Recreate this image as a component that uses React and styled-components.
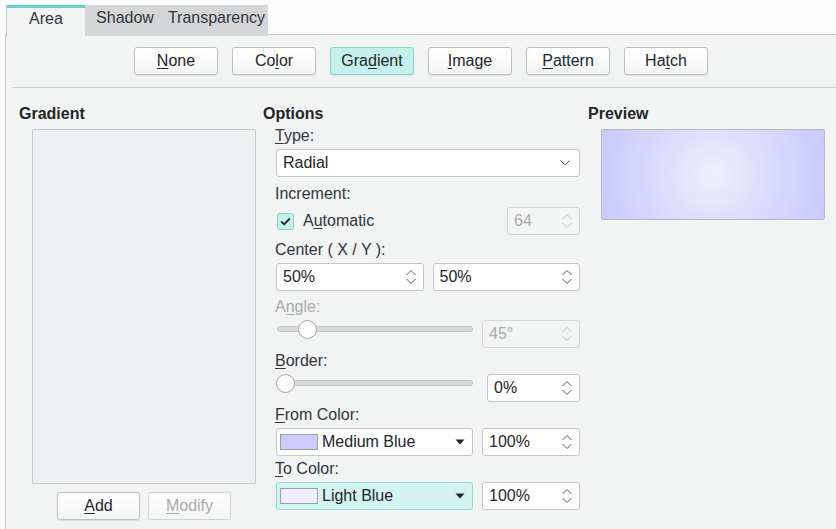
import React from "react";
import styled, { createGlobalStyle, css } from "styled-components";

const GlobalStyle = createGlobalStyle`
  html, body {
    margin: 0;
    padding: 0;
    background: #fbfbfb;
    font-family: "Liberation Sans", Arial, sans-serif;
    font-size: 16px;
    color: #232627;
    overflow: hidden;
  }
  * { box-sizing: border-box; }
`;

const Page = styled.div`
  width: 836px;
  height: 529px;
  display: flex;
  flex-direction: column;
`;

const TabBar = styled.div`
  display: flex;
  padding: 5px 0 0 6px;
  height: 35px;
  position: relative;
  z-index: 1;
  margin-bottom: -1px;
`;

const Tab = styled.div`
  height: 31px;
  display: flex;
  align-items: center;
  justify-content: center;
  padding: 0 0 5px 0;
  width: ${({ w }) => w}px;
  background: #d5d6d7;
  color: #31363b;
  ${({ active }) =>
    active &&
    css`
      background: #f2f3f3;
      border-top: 3px solid #66d3c6;
      border-left: 1px solid #c5c7c9;
      padding-bottom: 7px;
    `}
`;

const Frame = styled.div`
  flex: 1;
  margin-left: 5px;
  background: #f2f3f3;
  border-top: 1px solid #c5c7c9;
  border-left: 1px solid #c5c7c9;
  display: flex;
  flex-direction: column;
`;

const TypeRow = styled.div`
  display: flex;
  justify-content: center;
  gap: 14px;
  padding: 12px 0 12px 0;
`;

const Button = styled.button`
  width: ${({ w }) => w || 84}px;
  height: 28px;
  font-family: inherit;
  font-size: 16px;
  color: ${({ disabled }) => (disabled ? "#a8aaac" : "#232627")};
  background: ${({ active }) =>
    active ? "#c4efea" : "linear-gradient(#ffffff, #f4f5f5)"};
  border: 1px solid ${({ active, disabled }) =>
    active ? "#7fd6cc" : disabled ? "#d0d2d3" : "#bcbec0"};
  border-radius: 3px;
  box-shadow: ${({ disabled }) => (disabled ? "none" : "0 1px 1px rgba(0,0,0,0.08)")};
  padding: 0;
  cursor: default;
`;

const U = styled.span`
  text-decoration: underline;
  text-underline-offset: 2px;
`;

const Separator = styled.div`
  margin-left: 6px;
  border-top: 1px solid #d0d2d3;
`;

const Columns = styled.div`
  display: grid;
  grid-template-columns: 244px 325px 1fr;
  padding: 16px 0 0 13px;
`;

const Column = styled.div`
  display: flex;
  flex-direction: column;
`;

const Heading = styled.div`
  font-weight: bold;
  line-height: 20px;
  color: #232627;
`;

const ListBox = styled.div`
  margin: 5px 0 0 13px;
  width: 224px;
  height: 355px;
  background: #eff0f1;
  border: 1px solid #c5c7c9;
  border-radius: 2px;
`;

const ListButtons = styled.div`
  margin: 8px 0 0 13px;
  width: 224px;
  display: flex;
  justify-content: center;
  gap: 8px;
`;

const Label = styled.div`
  line-height: 19px;
  margin: ${({ mt }) => mt}px 0 4px 12px;
  color: ${({ disabled }) => (disabled ? "#a8aaac" : "#31363b")};
`;

const Row = styled.div`
  display: flex;
  align-items: ${({ top }) => (top ? "flex-start" : "center")};
  gap: 9px;
  margin-left: 13px;
  width: 304px;
`;

const Field = styled.div`
  height: 28px;
  display: flex;
  align-items: center;
  padding: 0 6px 0 6px;
  background: ${({ disabled, hl }) =>
    disabled ? "#f4f5f5" : hl ? "#d4f3ef" : "#ffffff"};
  border: 1px solid ${({ disabled, hl }) =>
    disabled ? "#d3d5d6" : hl ? "#8fdad1" : "#c3c5c7"};
  border-radius: 3px;
  color: ${({ disabled }) => (disabled ? "#a8aaac" : "#232627")};
  ${({ w }) => (w ? `width: ${w}px; flex: none;` : "flex: 1;")}
  ${({ ml }) => ml && `margin-left: ${ml}px;`}
`;

const FieldText = styled.span`
  flex: 1;
  white-space: nowrap;
`;

const Swatch = styled.span`
  width: 38px;
  height: 16px;
  margin: 0 4px 0 -3px;
  background: ${({ color }) => color};
  border: 1px solid #9c9ea2;
`;

const CheckRow = styled.div`
  display: flex;
  align-items: center;
  margin-left: 13px;
  width: 304px;
`;

const CheckBox = styled.span`
  width: 17px;
  height: 17px;
  margin-left: 1px;
  display: flex;
  align-items: center;
  justify-content: center;
  background: #c6f0eb;
  border: 1px solid #80d2c8;
  border-radius: 3px;
`;

const CheckLabel = styled.span`
  margin-left: 9px;
  flex: 1;
  color: #31363b;
`;

const Slider = styled.div`
  position: relative;
  flex: 1;
  height: 18px;
  margin-left: 1px;
  display: flex;
  align-items: center;
`;

const Groove = styled.div`
  width: 100%;
  height: 6px;
  border-radius: 3px;
  background: #d8d9da;
  border: 1px solid #c8cacb;
`;

const Thumb = styled.div`
  position: absolute;
  top: 0;
  left: ${({ at }) => at}px;
  width: 19px;
  height: 19px;
  border-radius: 50%;
  background: #fdfdfd;
  border: 1px solid #a3a5a8;
`;

const Preview = styled.div`
  margin: 5px 0 0 13px;
  width: 224px;
  height: 91px;
  border: 1px solid #b8bac0;
  border-radius: 2px;
  background: radial-gradient(circle farthest-corner at 50% 50%, #efeffb 0%, #dcdcfd 45%, #c9c9fd 100%);
`;

const SpinArrows = ({ disabled }) => (
  <svg width="12" height="20" viewBox="0 0 12 20" style={{ flex: "none" }}>
    <path
      d="M1.5 8 L6 3.5 L10.5 8 M1.5 12 L6 16.5 L10.5 12"
      fill="none"
      stroke={disabled ? "#b6b8ba" : "#55585c"}
      strokeWidth="1"
    />
  </svg>
);

const Chevron = () => (
  <svg width="12" height="8" viewBox="0 0 12 8" style={{ flex: "none", marginRight: 2 }}>
    <path d="M1.5 1.5 L6 6 L10.5 1.5" fill="none" stroke="#55585c" strokeWidth="1" />
  </svg>
);

const Caret = () => (
  <svg width="12" height="6" viewBox="0 0 12 6" style={{ flex: "none", marginRight: 0 }}>
    <path d="M1.5 0.5 L10.5 0.5 L6 5.5 Z" fill="#232627" />
  </svg>
);

const Check = () => (
  <svg width="11" height="9" viewBox="0 0 11 9">
    <path d="M1.2 4.5 L4.2 7.3 L9.8 1.5" fill="none" stroke="#232627" strokeWidth="1.8" />
  </svg>
);

const Spin = ({ value, disabled, w, ml }) => (
  <Field disabled={disabled} w={w} ml={ml}>
    <FieldText>{value}</FieldText>
    <SpinArrows disabled={disabled} />
  </Field>
);

const ColorDrop = ({ swatch, name, hl }) => (
  <Field w={197} hl={hl}>
    <Swatch color={swatch} />
    <FieldText>{name}</FieldText>
    <Caret />
  </Field>
);

const fillTypes = [
  ["", "N", "one"],
  ["Co", "l", "or"],
  ["Gra", "d", "ient"],
  ["", "I", "mage"],
  ["", "P", "attern"],
  ["Ha", "t", "ch"],
];

export default function App() {
  return (
    <Page>
      <GlobalStyle />
      <TabBar>
        <Tab active w={79}>Area</Tab>
        <Tab w={80}>Shadow</Tab>
        <Tab w={103}>Transparency</Tab>
      </TabBar>
      <Frame>
        <TypeRow>
          {fillTypes.map(([a, u, b], i) => (
            <Button key={i} active={i === 2}>
              {a}
              <U>{u}</U>
              {b}
            </Button>
          ))}
        </TypeRow>
        <Separator />
        <Columns>
          <Column>
            <Heading>Gradient</Heading>
            <ListBox />
            <ListButtons>
              <Button w={83}>
                <U>A</U>dd
              </Button>
              <Button w={83} disabled>
                <U>M</U>odify
              </Button>
            </ListButtons>
          </Column>

          <Column>
            <Heading>Options</Heading>
            <Label mt={2}>
              <U>T</U>ype:
            </Label>
            <Row>
              <Field>
                <FieldText>Radial</FieldText>
                <Chevron />
              </Field>
            </Row>
            <Label mt={7}>Increment:</Label>
            <CheckRow>
              <CheckBox>
                <Check />
              </CheckBox>
              <CheckLabel>
                A<U>u</U>tomatic
              </CheckLabel>
              <Spin value="64" disabled w={73} />
            </CheckRow>
            <Label mt={5}>Center ( X / Y ):</Label>
            <Row>
              <Spin value="50%" />
              <Spin value="50%" />
            </Row>
            <Label mt={6} disabled>
              A<U>n</U>gle:
            </Label>
            <Row top>
              <Slider>
                <Groove />
                <Thumb at={21} />
              </Slider>
              <Spin value="45°" disabled w={98} />
            </Row>
            <Label mt={3}>
              <U>B</U>order:
            </Label>
            <Row top>
              <Slider>
                <Groove />
                <Thumb at={-1} />
              </Slider>
              <Spin value="0%" w={93} ml={5} />
            </Row>
            <Label mt={3}>
              <U>F</U>rom Color:
            </Label>
            <Row>
              <ColorDrop swatch="#ccccff" name="Medium Blue" />
              <Spin value="100%" />
            </Row>
            <Label mt={3}>
              <U>T</U>o Color:
            </Label>
            <Row>
              <ColorDrop swatch="#eeeeff" name="Light Blue" hl />
              <Spin value="100%" />
            </Row>
          </Column>

          <Column>
            <Heading>Preview</Heading>
            <Preview />
          </Column>
        </Columns>
      </Frame>
    </Page>
  );
}
